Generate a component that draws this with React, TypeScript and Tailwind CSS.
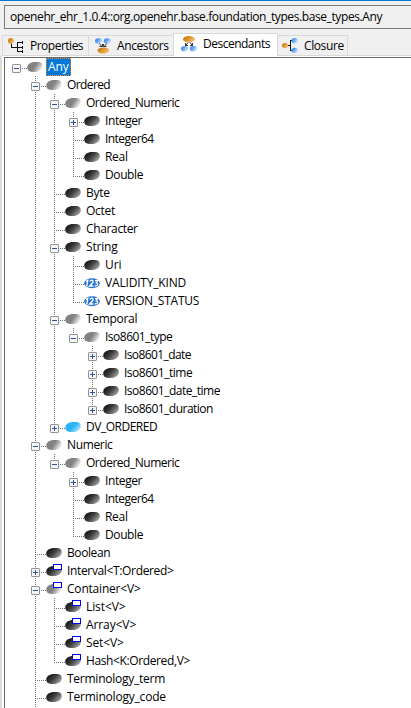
import React from "react";

type Kind = "class" | "abstract" | "enum" | "rm" | "generic" | "genericAbstract";
type Toggle = "plus" | "minus" | "none";

interface TreeNode {
  label: string;
  kind?: Kind;
  closed?: boolean;
  tracking?: string;
  children?: TreeNode[];
}

const numericChildren: TreeNode[] = [
  { label: "Integer", closed: true, tracking: "tracking-[-0.4px]" },
  { label: "Integer64", tracking: "tracking-[-0.55px]" },
  { label: "Real", tracking: "tracking-[-0.3px]" },
  { label: "Double", tracking: "tracking-[-0.4px]" },
];

const root: TreeNode = {
  label: "Any",
  kind: "abstract",
  children: [
    {
      label: "Ordered",
      kind: "abstract",
      tracking: "tracking-[-0.6px]",
      children: [
        { label: "Ordered_Numeric", kind: "abstract", tracking: "tracking-[-0.48px]", children: numericChildren },
        { label: "Byte", tracking: "tracking-[-0.3px]" },
        { label: "Octet", tracking: "tracking-[-0.3px]" },
        { label: "Character", tracking: "tracking-[-0.35px]" },
        {
          label: "String",
          tracking: "tracking-[-0.2px]",
          children: [
            { label: "Uri" },
            { label: "VALIDITY_KIND", kind: "enum", tracking: "tracking-[-0.18px]" },
            { label: "VERSION_STATUS", kind: "enum", tracking: "tracking-[-0.24px]" },
          ],
        },
        {
          label: "Temporal",
          kind: "abstract",
          tracking: "tracking-[-0.3px]",
          children: [
            {
              label: "Iso8601_type",
              kind: "abstract",
              tracking: "tracking-[-0.5px]",
              children: [
                { label: "Iso8601_date", closed: true, tracking: "tracking-[-0.6px]" },
                { label: "Iso8601_time", closed: true, tracking: "tracking-[-0.5px]" },
                { label: "Iso8601_date_time", closed: true, tracking: "tracking-[-0.5px]" },
                { label: "Iso8601_duration", closed: true, tracking: "tracking-[-0.52px]" },
              ],
            },
          ],
        },
        { label: "DV_ORDERED", kind: "rm", closed: true, tracking: "tracking-[-0.48px]" },
      ],
    },
    {
      label: "Numeric",
      kind: "abstract",
      tracking: "tracking-[-0.35px]",
      children: [{ label: "Ordered_Numeric", kind: "abstract", tracking: "tracking-[-0.48px]", children: numericChildren }],
    },
    { label: "Boolean", tracking: "tracking-[-0.4px]" },
    { label: "Interval<T:Ordered>", kind: "generic", closed: true, tracking: "tracking-[-0.35px]" },
    {
      label: "Container<V>",
      kind: "genericAbstract",
      tracking: "tracking-[-0.2px]",
      children: [
        { label: "List<V>", kind: "generic", tracking: "tracking-[-0.1px]" },
        { label: "Array<V>", kind: "generic", tracking: "tracking-[-0.1px]" },
        { label: "Set<V>", kind: "generic", tracking: "tracking-[-0.1px]" },
        { label: "Hash<K:Ordered,V>", kind: "generic", tracking: "tracking-[-0.38px]" },
      ],
    },
    { label: "Terminology_term", tracking: "tracking-[-0.25px]" },
    { label: "Terminology_code", tracking: "tracking-[-0.2px]" },
  ],
};

const V_DOTS = "bg-[repeating-linear-gradient(to_bottom,#707070_0px,#707070_1px,transparent_1px,transparent_2px)]";
const H_DOTS = "bg-[repeating-linear-gradient(to_right,#707070_0px,#707070_1px,transparent_1px,transparent_2px)]";

function Gradients() {
  return (
    <svg width="0" height="0" className="absolute">
      <defs>
        <linearGradient id="dark" x1="0" y1="0.2" x2="1" y2="0.8">
          <stop offset="0.15" stopColor="#1c1c1c" />
          <stop offset="0.45" stopColor="#3c3c3c" />
          <stop offset="0.75" stopColor="#7c7c7c" />
          <stop offset="1" stopColor="#b8b8b8" />
        </linearGradient>
        <linearGradient id="grey" x1="0" y1="0.3" x2="1" y2="0.7">
          <stop offset="0.45" stopColor="#828282" />
          <stop offset="0.65" stopColor="#acacac" />
          <stop offset="0.98" stopColor="#fff" />
        </linearGradient>
        <linearGradient id="cyan" x1="0" y1="0.2" x2="1" y2="0.8">
          <stop offset="0.5" stopColor="#2bb5f8" />
          <stop offset="1" stopColor="#c4ebff" />
        </linearGradient>
        <linearGradient id="blue" x1="0" y1="0" x2="1" y2="0.6">
          <stop offset="0" stopColor="#2f7de0" />
          <stop offset="0.5" stopColor="#62a5f2" />
          <stop offset="1" stopColor="#d5e9ff" />
        </linearGradient>
        <linearGradient id="orange" x1="0" y1="0" x2="1" y2="0.6">
          <stop offset="0" stopColor="#bd6d05" />
          <stop offset="0.5" stopColor="#dc922c" />
          <stop offset="1" stopColor="#f2c27b" />
        </linearGradient>
      </defs>
    </svg>
  );
}

function NodeIcon({ kind }: { kind: Kind }) {
  if (kind === "enum") {
    return (
      <svg width="16" height="18" viewBox="0 0 16 18" className="shrink-0">
        <ellipse cx="8" cy="9.2" rx="7.8" ry="5" fill="#2b76cf" />
        <g fill="none" stroke="#fff" strokeWidth="1.3">
          <path d="M2 7.4 3.8 6.4 2.8 12.4" />
          <path d="M5.9 7.4Q6.8 5.8 8.4 6.3 9.8 7 8.6 8.8L5.6 12H9.4" />
          <path d="M11 6.6H13.8L12.2 8.8Q14.2 9.2 13.4 11 12.6 12.2 10.8 11.6" />
        </g>
      </svg>
    );
  }
  const generic = kind === "generic" || kind === "genericAbstract";
  const fill =
    kind === "rm" ? "url(#cyan)" : kind === "abstract" || kind === "genericAbstract" ? "url(#grey)" : "url(#dark)";
  return (
    <svg width="16" height="18" viewBox="0 0 16 18" className="shrink-0">
      <path d="M0.2 9.6C0.2 6.4 3.6 4 8 4H11C14 4 15.8 5.6 15.8 8.2 15.8 11.6 12.4 14 8 14H5C2 14 0.2 12.4 0.2 9.6Z" fill={fill} />
      {generic && <rect x="7.5" y="2.5" width="8" height="5" fill="#fff" stroke="#0000f0" />}
    </svg>
  );
}

function ToggleBox({ open }: { open: boolean }) {
  return (
    <svg width="9" height="9" viewBox="0 0 9 9" className="mt-1.5 shrink-0">
      <rect x="0.5" y="0.5" width="8" height="8" rx="0.6" fill="#f6f6f6" stroke="#919191" />
      <path d="M2 4.5H7" stroke="#3050a8" />
      {!open && <path d="M4.5 2V7" stroke="#3050a8" />}
    </svg>
  );
}

interface RowProps {
  node: TreeNode;
  guides: boolean[];
  last: boolean;
}

function Row({ node, guides, last }: RowProps) {
  const level = guides.length;
  const toggle: Toggle = node.children ? "minus" : node.closed ? "plus" : "none";
  const childGuides = [...guides, level > 0 && !last];
  return (
    <>
      <div className="flex h-[18px] pl-3">
        {guides.map((on, i) => (
          <div key={i} className="w-[19px] shrink-0 pl-1">
            {on && <div className={`h-full w-px ${V_DOTS}`} />}
          </div>
        ))}
        <div className="grid w-[15px] shrink-0">
          {level > 0 && (
            <div className={`col-start-1 row-start-1 ml-1 w-px ${last ? "h-[11px]" : "h-[18px]"} ${V_DOTS}`} />
          )}
          <div className={`col-start-1 row-start-1 mt-2.5 ml-1 h-px w-[11px] ${H_DOTS}`} />
          {toggle !== "none" && (
            <div className="z-10 col-start-1 row-start-1">
              <ToggleBox open={toggle === "minus"} />
            </div>
          )}
        </div>
        <NodeIcon kind={node.kind ?? "class"} />
        {level === 0 ? (
          <span className="ml-[3px] h-[18px] w-[25px] border border-dotted border-[#ff8728] bg-[#0078d7] pl-px leading-4 text-white">
            {node.label}
          </span>
        ) : (
          <span className={`ml-[5px] leading-[18px] whitespace-nowrap ${node.tracking ?? ""}`}>{node.label}</span>
        )}
      </div>
      {node.children?.map((c, i) => (
        <Row
          key={c.label}
          node={c}
          guides={childGuides}
          last={i === node.children!.length - 1 && level > 0}
        />
      ))}
    </>
  );
}

function PropertiesIcon() {
  return (
    <svg width="16" height="16" viewBox="0 0 16 16">
      <g stroke="#111" fill="none" shapeRendering="crispEdges">
        <path d="M3.5 5V9.5H9M9.5 4V14M9 4.5H15M9 9.5H15M9 13.5H15M14.5 3V6M14.5 8V11M14.5 12V15" />
      </g>
      <circle cx="3" cy="3" r="3" fill="url(#orange)" />
    </svg>
  );
}

function AncestorsIcon() {
  return (
    <svg width="16" height="16" viewBox="0 0 16 16">
      <ellipse cx="3.6" cy="3" rx="3.6" ry="2.8" fill="url(#blue)" />
      <ellipse cx="12.4" cy="3" rx="3.6" ry="2.8" fill="url(#blue)" />
      <path d="M4.5 5.5 7 9M11.5 5.5 9 9M4.5 8.5H7.5V6M11.5 8.5H8.5V6" stroke="#222" strokeWidth="0.9" fill="none" />
      <ellipse cx="8.4" cy="12.5" rx="5.8" ry="3.1" fill="url(#orange)" />
    </svg>
  );
}

function DescendantsIcon() {
  return (
    <svg width="16" height="16" viewBox="0 0 16 16">
      <ellipse cx="8" cy="3.2" rx="6" ry="3.1" fill="url(#orange)" />
      <path d="M7 6.5 4.5 10M9 6.5 11.5 10M4.5 7V9.5H7M11.5 7V9.5H9" stroke="#222" strokeWidth="0.9" fill="none" />
      <ellipse cx="3.6" cy="12.7" rx="3.6" ry="2.8" fill="url(#blue)" />
      <ellipse cx="12.4" cy="12.7" rx="3.6" ry="2.8" fill="url(#blue)" />
    </svg>
  );
}

function ClosureIcon() {
  return (
    <svg width="16" height="16" viewBox="0 0 16 16">
      <path d="M5 7.5H8.5M11 2.5H8.5V12.5H11" stroke="#111" fill="none" shapeRendering="crispEdges" />
      <ellipse cx="3" cy="7.6" rx="3" ry="2.6" fill="url(#orange)" />
      <ellipse cx="12.7" cy="2.7" rx="3.2" ry="2.7" fill="url(#blue)" />
      <ellipse cx="12.7" cy="12.4" rx="3.2" ry="2.7" fill="url(#blue)" />
    </svg>
  );
}

export default function App() {
  return (
    <div className="flex h-[708px] w-[411px] flex-col overflow-hidden bg-[#f0f0f0] font-['Open_Sans',sans-serif] text-[12px] tracking-[-0.1px] text-black">
      <Gradients />
      <div className="h-px shrink-0 bg-[#0078d7]" />
      <div className="mt-1 ml-1 h-6 shrink-0 border border-r-0 border-[#7a7a7a] bg-[#f0f0f0] pl-[5px] leading-[22px] tracking-[-0.4px] whitespace-nowrap">
        openehr_ehr_1.0.4::org.openehr.base.foundation_types.base_types.Any
      </div>
      <div className="flex h-[27px] shrink-0 items-end pl-0.5">
        <div className="flex h-[21px] w-[87px] items-center border border-[#d9d9d9] pl-[5px]">
          <PropertiesIcon />
          <span className="ml-[6px] tracking-[-0.5px]">Properties</span>
        </div>
        <div className="flex h-[21px] w-[84px] items-center border-y border-[#d9d9d9] pl-[6px]">
          <AncestorsIcon />
          <span className="ml-[6px] tracking-[-0.4px]">Ancestors</span>
        </div>
        <div className="flex h-[23px] w-[105px] items-center border border-b-0 border-[#d9d9d9] bg-white pb-0.5 pl-[7px]">
          <DescendantsIcon />
          <span className="ml-[6px] tracking-[-0.5px]">Descendants</span>
        </div>
        <div className="flex h-[21px] w-[70px] items-center border border-l-0 border-[#d9d9d9] pl-[4px]">
          <ClosureIcon />
          <span className="ml-[6px] tracking-[-0.4px]">Closure</span>
        </div>
        <div className="h-px flex-1 bg-[#d9d9d9]" />
      </div>
      <div className="flex flex-1 border-l-2 border-[#dcdcdc] bg-white pt-px pl-0.5">
        <div className="h-[651px] flex-1 overflow-hidden border-t border-l border-[#696969] bg-white">
          <div className="-ml-[5px]">
            <Row node={root} guides={[]} last />
            <div className="flex h-1 pl-[35px]">
              <div className={`w-px ${V_DOTS}`} />
            </div>
          </div>
        </div>
      </div>
    </div>
  );
}
